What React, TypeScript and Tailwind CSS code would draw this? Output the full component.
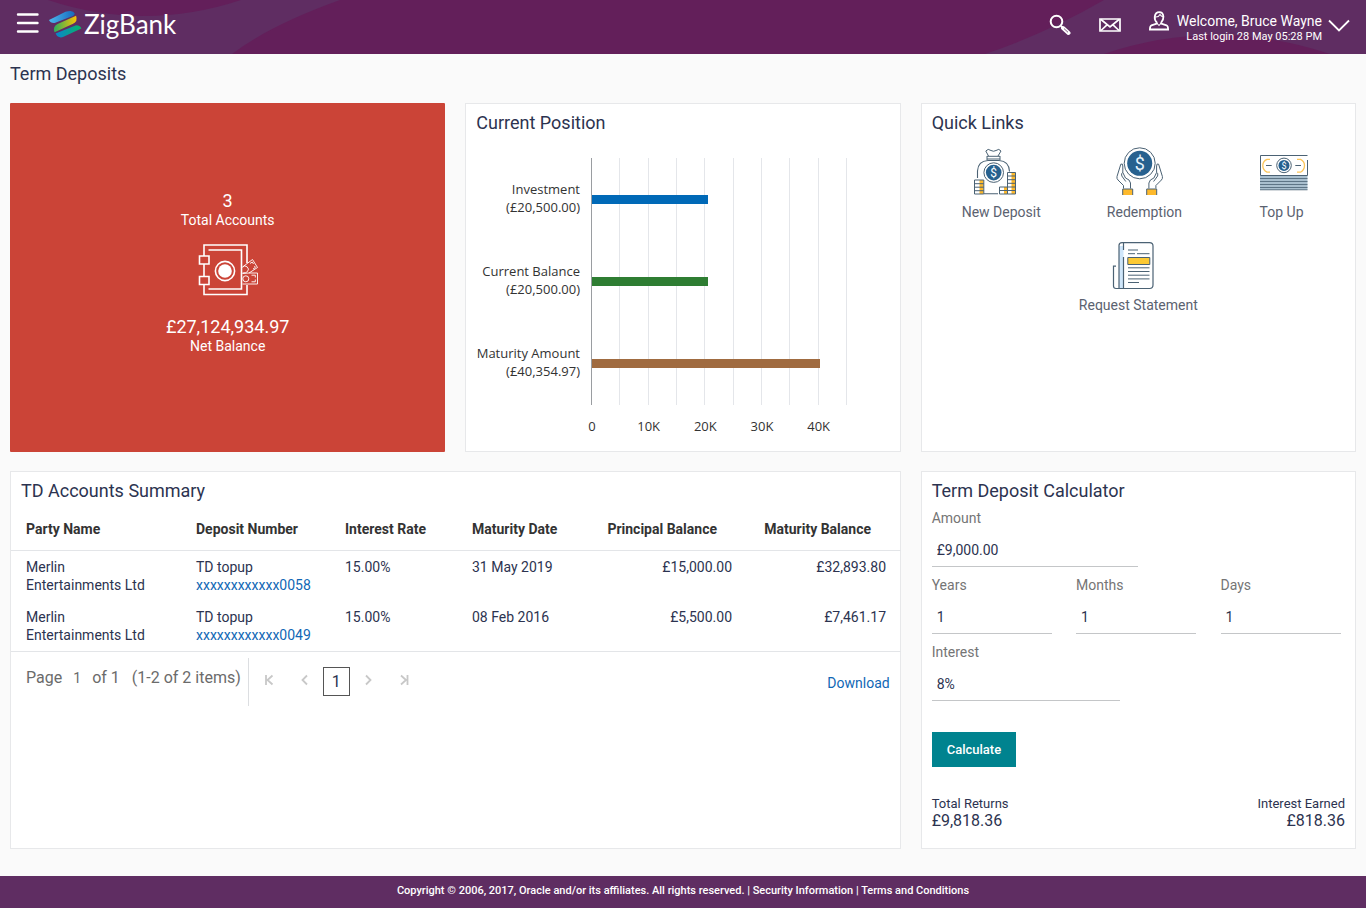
import React, { useState } from 'react';

interface Account {
    party: string;
    product: string;
    number: string;
    rate: string;
    maturityDate: string;
    principal: string;
    maturity: string;
}

interface ChartItem {
    label: string;
    amount: string;
    value: number;
    color: string;
}

const accounts: Account[] = [
    { party: 'Merlin Entertainments Ltd', product: 'TD topup', number: 'xxxxxxxxxxxx0058', rate: '15.00%', maturityDate: '31 May 2019', principal: '£15,000.00', maturity: '£32,893.80' },
    { party: 'Merlin Entertainments Ltd', product: 'TD topup', number: 'xxxxxxxxxxxx0049', rate: '15.00%', maturityDate: '08 Feb 2016', principal: '£5,500.00', maturity: '£7,461.17' },
];

const chartItems: ChartItem[] = [
    { label: 'Investment', amount: '(£20,500.00)', value: 20500, color: '#0069b7' },
    { label: 'Current Balance', amount: '(£20,500.00)', value: 20500, color: '#2e7d32' },
    { label: 'Maturity Amount', amount: '(£40,354.97)', value: 40354.97, color: '#a06b40' },
];

const Logo = () => (
    <svg viewBox="146 30 100 84" className="h-7 w-[33px]" aria-hidden="true">
        <defs>
            <linearGradient id="logoTop" x1="0" x2="1">
                <stop offset="0" stopColor="#4db8ee" />
                <stop offset="1" stopColor="#1668bd" />
            </linearGradient>
            <linearGradient id="logoMid" x1="0" x2="1">
                <stop offset="0" stopColor="#2cae5c" />
                <stop offset="1" stopColor="#fcc203" />
            </linearGradient>
            <linearGradient id="logoLow" x1="0" x2="1">
                <stop offset="0" stopColor="#0b84cf" />
                <stop offset="1" stopColor="#06b469" />
            </linearGradient>
        </defs>
        <path d="M146 60 L196 35 Q219 28 224 40 Q223 47 212 50 L163 69 Q150 70 146 60Z" fill="url(#logoTop)" />
        <path d="M228 47 Q234 64 219 71 L163 97 Q156 80 172 72Z" fill="url(#logoMid)" />
        <path d="M166 101 L228 76 Q242 77 244 86 L190 111 Q174 117 166 101Z" fill="url(#logoLow)" />
    </svg>
);

const Header = () => (
    <header className="relative flex h-[54px] items-center justify-between overflow-hidden bg-[#5f2d62] px-4 text-white">
        <svg viewBox="0 0 1366 54" preserveAspectRatio="none" className="absolute inset-0 h-full w-full" aria-hidden="true">
            <path d="M48 0 Q144 32 241 0Z" fill="#631f5a" />
            <path d="M340 0 Q270 25 232 54 H985 Q1045 34 1104 0Z" fill="#631f5a" />
            <path d="M1104 54 Q1215 16 1330 54Z" fill="#631f5a" />
        </svg>
        <div className="relative flex items-center">
            <button type="button" aria-label="Menu" className="mb-2 mr-[10px]">
                <svg viewBox="0 0 23 20" className="h-5 w-[23px]" stroke="#fff" strokeWidth="2.4" strokeLinecap="round">
                    <path d="M2 1.5H21.5M2 10H21.5M2 18.5H21.5" />
                </svg>
            </button>
            <a href="#home" className="mb-[6px] flex items-center gap-[2px]">
                <Logo />
                <span className="font-['Lato',sans-serif] text-[26px] leading-8">ZigBank</span>
            </a>
        </div>
        <div className="relative flex items-center">
            <button type="button" aria-label="Search" className="mr-7">
                <svg viewBox="0 0 22 22" className="mb-1 h-[22px] w-[22px]" fill="none" stroke="#fff">
                    <circle cx="7.5" cy="7.5" r="5.8" strokeWidth="2" />
                    <path d="M12 12L14 14" strokeWidth="2" />
                    <path d="M14 14L19.5 19" strokeWidth="4" strokeLinecap="round" />
                    <path d="M15 14.6L19 18.3" stroke="#5f2d62" strokeWidth="0.8" />
                </svg>
            </button>
            <button type="button" aria-label="Messages" className="mr-7">
                <svg viewBox="0 0 22 14" className="mb-1 h-[14px] w-[22px]" fill="none" stroke="#fff" strokeWidth="1.7">
                    <path d="M1 1H21V13H1Z" />
                    <path d="M2 1.5L11 9L20 1.5M2 12.5L8 6.8M20 12.5L14 6.8" />
                </svg>
            </button>
            <svg viewBox="0 0 20 20" className="mb-3 mr-2 h-5 w-5" fill="none" stroke="#fff" strokeWidth="1.8" aria-hidden="true">
                <path d="M7.8 11.5Q5.3 9 5.8 5.5Q6.5 1.2 10.2 1.2Q14 1.2 14.4 5.5Q14.6 9 12.2 11.5" />
                <path d="M6 6Q9.5 6.5 11 3.5Q12 5.5 14.3 5.8" strokeWidth="1.1" />
                <path d="M7.8 11.3V12.5L2.5 14.3Q.9 15 .9 18.5H19.1Q19.1 15 17.5 14.3L12.2 12.5V11.3" />
                <path d="M7.8 12L10 14.5L12.2 12" strokeWidth="1.1" />
            </svg>
            <button type="button" className="flex items-center">
                <span className="flex flex-col items-end pt-[3px]">
                    <span className="text-sm leading-4">Welcome, Bruce Wayne</span>
                    <span className="text-[11px] leading-4">Last login 28 May 05:28 PM</span>
                </span>
                <svg viewBox="0 0 22 13" className="mb-1 ml-[6px] h-[13px] w-[22px]" fill="none" stroke="#fff" strokeWidth="1.8">
                    <path d="M1 1.5L11 11.5L21 1.5" />
                </svg>
            </button>
        </div>
    </header>
);

const SafeIcon = () => (
    <svg viewBox="47 62 62 56" className="h-14 w-[62px]" fill="none" stroke="#fff" strokeWidth="1.6" aria-hidden="true">
        <path d="M54 76V65H97V83M97 105V114.5H54V104.5M54 84V96.5" />
        <path d="M58.5 70H91.5V109H58.5" />
        <path d="M49.5 76H59V84H49.5ZM49.5 96.5H59V104.5H49.5Z" />
        <circle cx="75" cy="91" r="9.6" />
        <circle cx="75" cy="91" r="6.8" fill="#fff" stroke="none" />
        <g strokeWidth="0.9">
            <path d="M92.5 87L102.5 79.5L107.5 87.5L99 93" />
            <path d="M92.5 93.5L99 93H107.5V104H92.5" />
            <path d="M92.5 87.2A3.2 3.2 0 0 1 97.5 91.5Q96.5 93 92.5 93" />
            <circle cx="95.8" cy="98.8" r="3" />
            <path d="M100 83.5L102.3 82L103.5 84M104.5 86L105.3 87.5L103 89M101.5 95.2H105.3V97.5M105.3 99.5V101.8H101.5" />
        </g>
    </svg>
);

const DepositIcon = () => (
    <svg viewBox="6 3 60 52" className="h-[52px] w-[60px]" fill="none" stroke="#4b6274" aria-hidden="true">
        <path d="M12.5 36V29Q13 19 23 18.5H34Q44 19 44.5 29.5M19 51.7H33" strokeWidth="1.1" />
        <path d="M22 14.3H35M22 17H35M23.5 14L20.8 9Q23 6 26 8.5Q28.5 10 31 8.5Q34 6 36 9L33 14M22 14V18M35 14V18" />
        <circle cx="28.7" cy="30.6" r="9.8" fill="#fff" />
        <circle cx="28.7" cy="30.6" r="7.8" fill="#27618f" stroke="none" />
        <text x="28.7" y="34.8" textAnchor="middle" fontSize="12" fill="#fff" stroke="none">$</text>
        <g fill="#fdb92c" stroke="none">
            <path d="M14.5 38H18.5V52H14.5ZM39 45H42.5V52H39ZM46.5 30.5H50.5V52H46.5Z" />
        </g>
        <path d="M9.5 38H18.8V52H9.5ZM9.5 41.7H18.8M9.5 45.2H18.8M9.5 48.7H18.8" />
        <path d="M34.5 45H42.5V52H34.5ZM34.5 48.5H42.5" />
        <path d="M42.5 30.5H50.5V52H42.5ZM42.5 34H50.5M42.5 37.7H50.5M42.5 41.3H50.5M42.5 45H50.5M42.5 48.5H50.5" />
    </svg>
);

const hand = 'M10.8 22.2Q12.8 21 12.8 24V30.5L15.5 36Q20 37.5 20.5 41V46.5M10.8 22.2L7 34.5Q6.5 36.5 8 38L13.5 43.5V46.5M12.8 30.5Q10.8 31 11.8 34L15.8 39.5';

const RedemptionIcon = () => (
    <svg viewBox="4 3 60 52" className="h-[52px] w-[60px]" fill="none" stroke="#4b6274" aria-hidden="true">
        <path d={hand} />
        <path d="M12.7 47H22.7V53H12.7Z" fill="#fdb92c" stroke="none" />
        <path d="M12.7 53V47H22.7V53" />
        <g transform="translate(59.4 0) scale(-1 1)">
            <path d={hand} />
            <path d="M12.7 47H22.7V53H12.7Z" fill="#fdb92c" stroke="none" />
            <path d="M12.7 53V47H22.7V53" />
        </g>
        <circle cx="29.7" cy="21.3" r="15.5" fill="#fff" />
        <circle cx="29.7" cy="21.3" r="12.5" fill="#27618f" stroke="none" />
        <text x="29.7" y="27.5" textAnchor="middle" fontSize="18" fill="#e6f3fc" stroke="none">$</text>
    </svg>
);

const TopUpIcon = () => (
    <svg viewBox="2 3 60 52" className="h-[52px] w-[60px]" fill="none" stroke="#4b6274" aria-hidden="true">
        <path d="M10 33.5H57.5V48H10Z" fill="#a9bfce" stroke="none" />
        <path d="M57.5 13.5H10.5V33.5H57.5V18" />
        <path d="M10 36.5H57.5M10 39.5H57.5M10 42.5H57.5M10 45.5H57.5M10 47.8H57.5" strokeWidth="0.8" />
        <path d="M20 17.3H17Q12.8 19 12.8 23.5Q12.8 28 17 30.2H20M47 17.3H50.5Q54.5 19 54.5 23.5Q54.5 28 50.5 30.2H47" stroke="#fdc65a" strokeWidth="1.3" />
        <path d="M16 23.5H21.7M45.3 23.5H51" strokeWidth="1.2" />
        <circle cx="34" cy="23.4" r="7.3" />
        <circle cx="34" cy="23.4" r="5.5" fill="#27618f" stroke="none" />
        <text x="34" y="26.6" textAnchor="middle" fontSize="9" fill="#fff" stroke="none">$</text>
    </svg>
);

const StatementIcon = () => (
    <svg viewBox="3 3 60 52" className="h-[52px] w-[60px]" fill="none" stroke="#4b6274" aria-hidden="true">
        <path d="M14 11H18.5V53H14Z" fill="#cfe6fa" stroke="none" />
        <path d="M14 53V10.5Q14 7.7 17 7.7H44.5Q48 7.7 48 11V50Q48 53.5 44.5 53.5H11Q8.5 53.5 8.5 51V31.2H11M18.5 8V15M18.5 22V53" strokeWidth="1.2" />
        <path d="M23 15H33M23 18.7H30M32 18.7H44.5M23 32.8H44.5M23 36.5H44.5M23 40.2H44.5M23 43.9H44.5M23 47.5H34" />
        <path d="M22.8 22.5H44.8V29.5H22.8Z" fill="#fcc934" />
    </svg>
);

const quickLinks = [
    { label: 'New Deposit', icon: <DepositIcon />, span: '' },
    { label: 'Redemption', icon: <RedemptionIcon />, span: '' },
    { label: 'Top Up', icon: <TopUpIcon />, span: '' },
    { label: 'Request Statement', icon: <StatementIcon />, span: 'col-span-3' },
];

const Card: React.FC<{ title: string; className?: string; children: React.ReactNode }> = ({ title, className = '', children }) => (
    <section className={`border border-[#e7e8ea] bg-white pt-2 ${className}`}>
        <h2 className="px-[10px] text-lg leading-[22px]">{title}</h2>
        {children}
    </section>
);

const PositionChart = () => {
    const left = 125;
    const step = 85 / 3;
    return (
        <svg viewBox="0 0 400 310" className="h-[310px] w-[400px] font-['Open_Sans',sans-serif] text-[13px]" fill="#333" role="img" aria-label="Current Position">
            {Array.from({ length: 9 }, (_, i) => (
                <path key={i} d={`M${Math.round(left + (i + 1) * step) + 0.5} 24V271`} stroke="#e4e6ea" />
            ))}
            {chartItems.map((item, i) => (
                <g key={item.label}>
                    <text x="114" y={60 + i * 82} textAnchor="end">{item.label}</text>
                    <text x="114" y={78 + i * 82} textAnchor="end">{item.amount}</text>
                    <rect x={left} y={61 + i * 82} width={Math.round((item.value / 5000) * step + 0.5)} height="9" fill={item.color} />
                </g>
            ))}
            <path d={`M${left + 0.5} 24V271`} stroke="#9a9da1" />
            {['0', '10K', '20K', '30K', '40K'].map((tick, i) => (
                <text key={tick} x={left + 1 + i * 2 * step} y="297" textAnchor="middle">{tick}</text>
            ))}
        </svg>
    );
};

const AccountsTable = () => (
    <table className="mt-[6px] w-full table-fixed text-sm leading-[18px]">
        <thead>
            <tr className="h-[42px] border-b border-[#e3e5e8] text-left text-[#333]">
                <th className="w-[170px] pl-[15px] font-bold">Party Name</th>
                <th className="w-[149px] pl-[15px] font-bold">Deposit Number</th>
                <th className="w-[127px] pl-[15px] font-bold">Interest Rate</th>
                <th className="w-[118px] pl-[15px] font-bold">Maturity Date</th>
                <th className="w-[172px] pr-[30px] text-right font-bold">Principal Balance</th>
                <th className="w-[154px] pr-[30px] text-right font-bold">Maturity Balance</th>
            </tr>
        </thead>
        <tbody className="border-b border-[#e3e5e8]">
            {accounts.map(account => (
                <tr key={account.number} className="h-[50px] align-top">
                    <td className="py-[7px] pl-[15px] pr-[30px]">{account.party}</td>
                    <td className="py-[7px] pl-[15px]">
                        {account.product}
                        <br />
                        <a href="#account" className="text-[#1067b5]">{account.number}</a>
                    </td>
                    <td className="py-[7px] pl-[15px]">{account.rate}</td>
                    <td className="py-[7px] pl-[15px]">{account.maturityDate}</td>
                    <td className="py-[7px] pr-[15px] text-right">{account.principal}</td>
                    <td className="py-[7px] pr-[15px] text-right">{account.maturity}</td>
                </tr>
            ))}
        </tbody>
    </table>
);

const PagerButton: React.FC<{ label: string; path: string }> = ({ label, path }) => (
    <button type="button" aria-label={label} className="flex h-7 w-7 items-center justify-center pb-1">
        <svg viewBox="0 0 12 12" className="h-3 w-3" fill="none" stroke="#c8c8c8" strokeWidth="1.8">
            <path d={path} />
        </svg>
    </button>
);

const Pagination = () => {
    const [page, setPage] = useState('1');
    return (
        <div className="flex items-center justify-between pl-[15px] pr-[10px] pt-[6px]">
            <div className="flex items-center">
                <div className="flex h-12 items-start border-r border-[#dcdee1] pr-[7px] pt-2 text-base leading-6 text-[#6b6b6b]">
                    <label htmlFor="page">Page</label>
                    <input id="page" value={page} onChange={(e) => setPage(e.target.value)} className="h-6 w-[30px] text-center text-sm" />
                    <span className="mr-3">of 1</span>
                    <span>(1-2 of 2 items)</span>
                </div>
                <nav className="flex items-center pl-[6px]" aria-label="Pages">
                    <PagerButton label="First page" path="M3 1V11M9.5 1.5L4.5 6L9.5 10.5" />
                    <span className="w-2" />
                    <PagerButton label="Previous page" path="M8 1.5L3.5 6L8 10.5" />
                    <button type="button" className="mx-1 h-[29px] w-[27px] border border-[#555] text-base">1</button>
                    <PagerButton label="Next page" path="M4 1.5L8.5 6L4 10.5" />
                    <span className="w-2" />
                    <PagerButton label="Last page" path="M9.5 1V11M3 1.5L8 6L3 10.5" />
                </nav>
            </div>
            <a href="#download" className="pt-[2px] text-sm text-[#1067b5]">Download</a>
        </div>
    );
};

const Field: React.FC<{ id: string; label: string; value: string; width: string }> = ({ id, label, value, width }) => (
    <div>
        <label htmlFor={id} className="block text-sm leading-5 text-[#757575]">{label}</label>
        <input id={id} defaultValue={value} className={`block h-[39px] border-b border-[#c4c6c8] pl-[5px] pt-[6px] text-sm ${width}`} />
    </div>
);

const Calculator = () => (
    <form className="mt-[6px] flex flex-col gap-2 px-[10px]" onSubmit={(e) => e.preventDefault()}>
        <Field id="amount" label="Amount" value="£9,000.00" width="w-1/2" />
        <div className="grid grid-cols-3 gap-5">
            <Field id="years" label="Years" value="1" width="w-[120px]" />
            <Field id="months" label="Months" value="1" width="w-[120px]" />
            <Field id="days" label="Days" value="1" width="w-[120px]" />
        </div>
        <Field id="interest" label="Interest" value="8%" width="w-[188px]" />
        <button type="submit" className="mt-[23px] h-[35px] self-start bg-[#00838f] px-[15px] text-[13px] font-medium text-white">Calculate</button>
        <div className="mt-[21px] flex justify-between">
            <div>
                <div className="text-[13px] leading-4">Total Returns</div>
                <div className="text-base leading-[18px]">£9,818.36</div>
            </div>
            <div className="text-right">
                <div className="text-[13px] leading-4">Interest Earned</div>
                <div className="text-base leading-[18px]">£818.36</div>
            </div>
        </div>
    </form>
);

const App: React.FC = () => (
    <div className="flex min-h-screen flex-col bg-[#fafafa] font-['Roboto',sans-serif] text-[#2c3350]">
        <Header />
        <main className="flex-1 px-[10px]">
            <h1 className="py-2 text-lg leading-6">Term Deposits</h1>
            <div className="mt-[9px] grid grid-cols-3 gap-x-5 gap-y-[19px]">
                <section className="flex min-h-[349px] flex-col items-center justify-center rounded-[1px] bg-[#cb4437] pb-[10px] text-white">
                    <div className="text-lg leading-5">3</div>
                    <div className="mb-[13px] text-sm leading-[18px]">Total Accounts</div>
                    <SafeIcon />
                    <div className="mt-[19px] text-lg leading-5">£27,124,934.97</div>
                    <div className="text-sm leading-[18px]">Net Balance</div>
                </section>
                <Card title="Current Position">
                    <PositionChart />
                </Card>
                <Card title="Quick Links">
                    <ul className="mt-[11px] grid grid-cols-[34fr_36fr_31fr] gap-y-[17px] px-[10px]">
                        {quickLinks.map(link => (
                            <li key={link.label} className={`flex justify-center ${link.span}`}>
                                <a href="#link" className="flex flex-col items-center gap-[6px] text-sm leading-[18px] text-[#5b6270]">
                                    {link.icon}
                                    <span>{link.label}</span>
                                </a>
                            </li>
                        ))}
                    </ul>
                </Card>
                <Card title="TD Accounts Summary" className="col-span-2 min-h-[378px]">
                    <AccountsTable />
                    <Pagination />
                </Card>
                <Card title="Term Deposit Calculator">
                    <Calculator />
                </Card>
            </div>
        </main>
        <footer className="flex h-8 items-center justify-center bg-[#5f2d62] pb-[2px] text-[11px] font-medium text-white">
            <p>
                Copyright © 2006, 2017, Oracle and/or its affiliates. All rights reserved. | <a href="#security">Security Information</a> | <a href="#terms">Terms and Conditions</a>
            </p>
        </footer>
    </div>
);

export default App;
